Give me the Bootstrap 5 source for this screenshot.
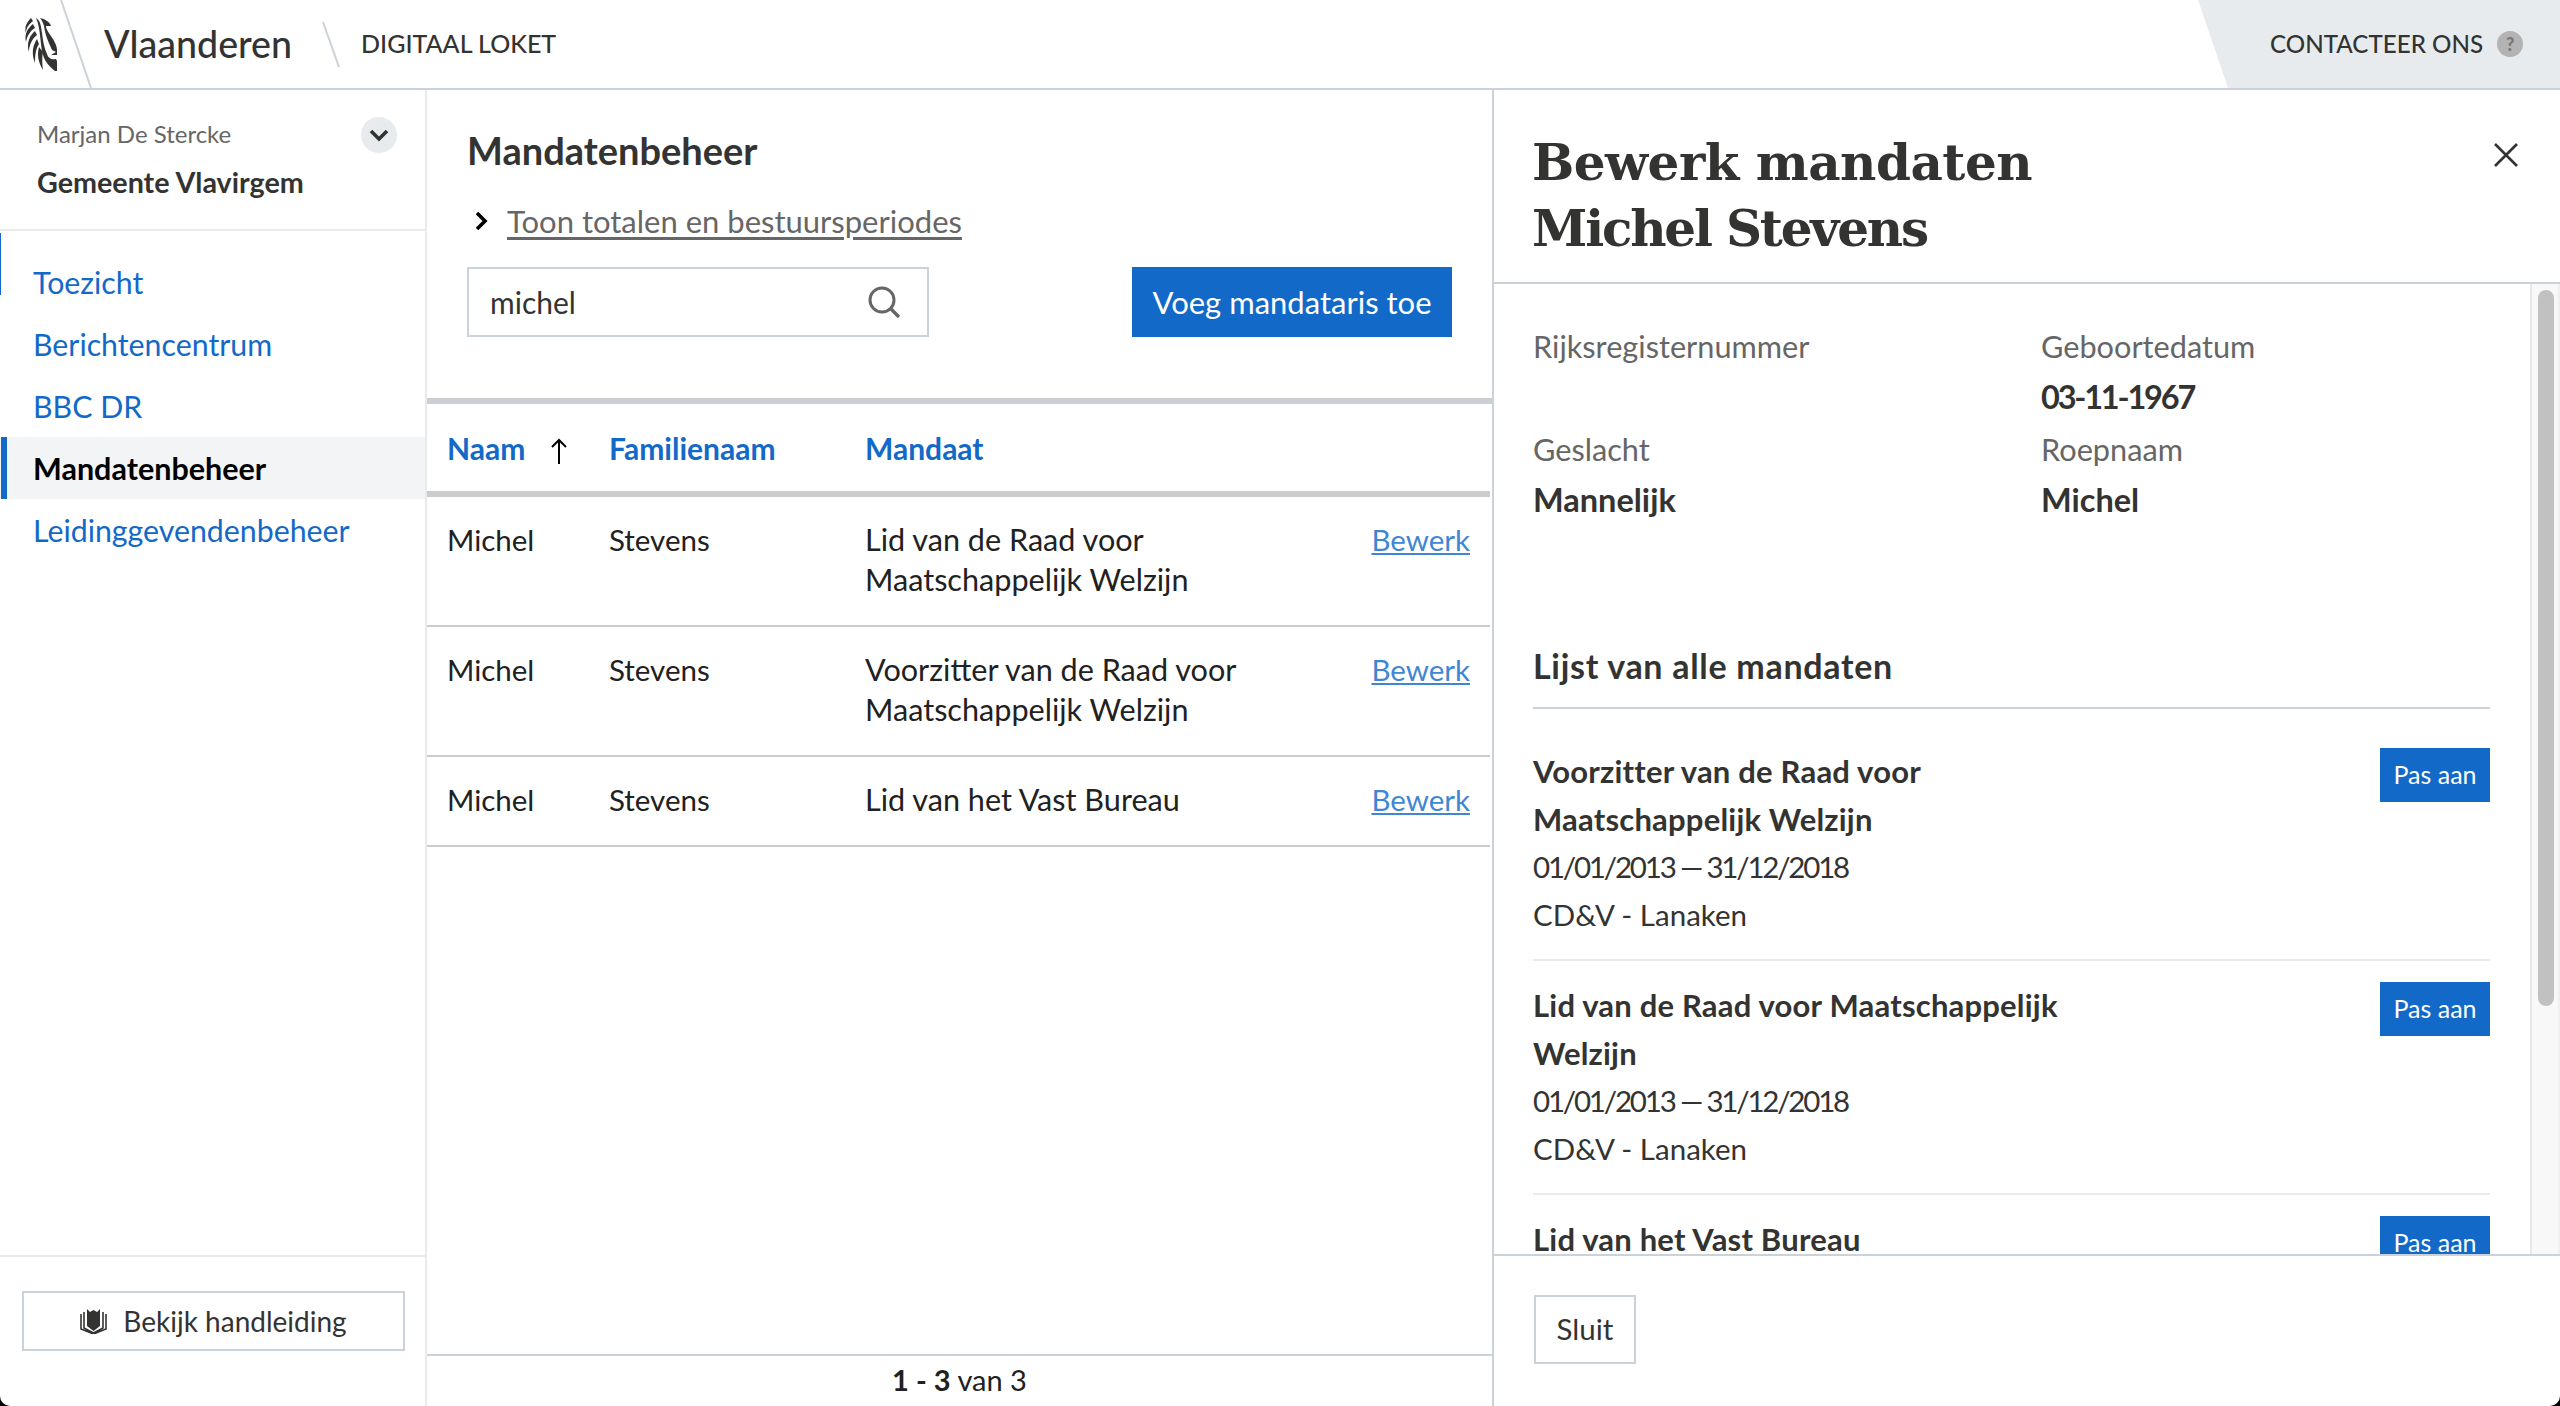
<!DOCTYPE html>
<html lang="nl">
<head>
<meta charset="UTF-8">
<meta name="viewport" content="width=device-width, initial-scale=1.0">
<title>Mandatenbeheer</title>
<link href="https://cdn.jsdelivr.net/npm/bootstrap@5.3.0/dist/css/bootstrap.min.css" rel="stylesheet">
<style>
html, body { height: 100%; background: #000; }
body { font-family: Lato, "Liberation Sans", sans-serif; font-size: 29px; color: #333332; overflow: hidden; }
.shell { height: 1406px; background: #fff; border-radius: 0 0 10px 10px; overflow: hidden; }

/* top bar */
.topbar { height: 90px; border-bottom: 2px solid #cbd2da; flex: none; }
.logo-mark { width: 34px; height: 54px; margin: 0 0 0 23px; flex: none; }
.slash-big { width: 32px; height: 88px; margin-left: 3px; flex: none; }
.brand-name { font-size: 37.6px; font-weight: 500; margin-left: 12px; line-height: 1; }
.slash-small { width: 18px; height: 45px; margin-left: 30px; flex: none; }
.brand-sub { font-size: 25px; font-weight: 500; margin-left: 21px; }
.contact-box { width: 362px; height: 88px; background: #e8ebee; clip-path: polygon(0 0, 100% 0, 100% 100%, 30px 100%); font-size: 24.2px; font-weight: 500; padding-left: 72px; gap: 14px; }
.help-dot { width: 26px; height: 26px; border-radius: 50%; background: #b3b3b3; color: #777; font-size: 18px; font-weight: 900; line-height: 26px; text-align: center; }

/* sidebar */
.side-col { width: 427px; border-right: 2px solid #e8ebee; flex: none; }
.user-block { height: 141px; border-bottom: 2px solid #e8ebee; padding: 28px 0 0 37px; flex: none; position: relative; }
.user-name { font-size: 24px; color: #666; line-height: 32px; }
.user-org { font-size: 28.7px; font-weight: 700; line-height: 34px; margin-top: 15px; }
.user-toggle { width: 36px; height: 36px; border-radius: 50%; background: #e8ebee; right: 28px; top: 27px; border: 0; padding: 0; }
.side-nav { padding-top: 20px; position: relative; }
.side-nav::before { content: ""; position: absolute; left: 0; top: 2px; width: 1px; height: 62px; background: #1269c8; }
.side-nav .nav-link { height: 62px; line-height: 62px; padding: 0 0 0 33px; font-size: 30.3px; color: #1269c8; }
.side-nav .nav-link.active { background: #f3f4f6; color: #000; font-weight: 700; font-size: 30.5px; position: relative; }
.side-nav .nav-link.active::before { content: ""; position: absolute; left: 1px; top: 0; bottom: 0; width: 6px; background: #1269c8; }
.side-foot { height: 151px; border-top: 2px solid #e8ebee; padding: 34px 20px 0 22px; margin-top: auto; flex: none; }
.btn-plain { border: 2px solid #cbd2da; border-radius: 0; background: #fff; color: #333332; }
.btn-manual { width: 383px; height: 60px; font-size: 28px; gap: 16px; padding: 0; }

/* middle */
.mid-col { width: 1067px; border-right: 2px solid #cbd2da; flex: none; }
.mid-head { height: 314px; padding: 0 40px 0 40px; border-bottom: 6px solid #cbcfd3; flex: none; }
.mid-title { font-size: 38px; font-weight: 700; line-height: 44px; padding-top: 38px; margin: 0; }
.toggle-row { margin-top: 27px; gap: 19px; height: 44px; padding-left: 7px; }
.toggle-row a { color: #666; font-size: 31px; text-underline-offset: 4px; }
.search-row { margin-top: 24px; }
.search-box { width: 462px; height: 70px; border: 2px solid #cbd2da; padding: 0 26px 0 21px; font-size: 30px; }
.btn-vl { background: #1269c8; color: #fff; border: 0; border-radius: 0; }
.btn-add { width: 320px; height: 70px; font-size: 31px; padding: 0; }
.mandate-table { margin: 0; width: 1063px; table-layout: fixed; border-collapse: collapse; }
.mandate-table th, .mandate-table td { font-family: Lato, "Liberation Sans", sans-serif; padding: 23px 20px 25px; line-height: 40px; font-size: 29.5px; color: #212121; border-bottom: 2px solid #ccc; vertical-align: top; box-shadow: none; }
.mandate-table th { height: 90px; padding: 0 20px; vertical-align: middle; border-bottom: 6px solid #ccc; color: #1269c8; font-weight: 700; font-size: 30px; white-space: nowrap; }
.mandate-table td.mandate-name { font-size: 30.6px; }
.mandate-table a { color: #3f86d4; }
.sort-arrow { width: 20px; height: 26px; margin-left: 24px; vertical-align: -4px; }
.mid-foot { height: 52px; border-top: 2px solid #cbd2da; margin-top: auto; text-align: center; line-height: 48px; font-size: 29px; color: #212121; flex: none; }

/* right panel */
.panel-col { min-width: 0; }
.panel-head { height: 194px; border-bottom: 2px solid #cbd2da; padding: 40px 40px 0 38px; flex: none; position: relative; }
.panel-title { font-family: "DejaVu Serif", "Liberation Serif", serif; font-size: 50px; font-weight: 700; line-height: 66px; margin: 0; letter-spacing: -.5px; }
.panel-title span { letter-spacing: -2.2px; }
.panel-close { right: 42px; top: 53px; width: 24px; height: 24px; background: none; border: 0; padding: 0; }
.panel-mid { min-height: 0; height: 970px; flex: none; }
.panel-body { padding: 0 40px 0 39px; overflow: hidden; min-width: 0; }
.detail-grid { padding-top: 42px; grid-template-columns: 508px 1fr; }
.detail-cell { height: 102.5px; }
.detail-label { color: #666; line-height: 42px; font-size: 30.7px; }
.detail-value { font-weight: 700; line-height: 48px; font-size: 32.5px; margin-top: 5px; }
.detail-value.is-date { letter-spacing: -2.2px; }
.list-title { font-size: 34px; font-weight: 700; letter-spacing: .7px; line-height: 40px; margin: 115px 0 0; padding-bottom: 21px; border-bottom: 2px solid #cbd2da; }
.mandate-item { padding: 20px 0; border-bottom: 2px solid #e8ebee; line-height: 48px; font-size: 29.5px; }
.mandate-item.is-first { padding-top: 38px; }
.mandate-item b { display: block; font-weight: 700; font-size: 31px; letter-spacing: .2px; max-width: 560px; }
.item-dates { letter-spacing: -2.2px; }
.btn-small { width: 110px; height: 54px; font-size: 25px; padding: 0; flex: none; margin-top: 1px; }
.bar-track { width: 30px; flex: none; background: #f8f8f8; border-left: 2px solid #e8e8e8; border-right: 2px solid #f0f0f0; padding: 6px 4px 0 6px; }
.bar-thumb { height: 716px; border-radius: 8px; background: #c1c1c1; }
.panel-foot { height: 152px; border-top: 2px solid #cbd2da; padding: 39px 0 0 40px; flex: none; }
.btn-close-panel { width: 102px; height: 69px; font-size: 29.5px; padding: 0; }
</style>
</head>
<body>
<div class="shell d-flex flex-column">

    <!-- top bar -->
    <header class="topbar d-flex align-items-center">
        <svg class="logo-mark" viewBox="0 0 34 54" fill="#333332">
            <path d="M8 1 C4 5 1 10 3 16 C3 11 6 7 10 4 Z"/>
            <path d="M10 7 C5 11 1 17 3 25 C4 19 7 14 12 11 Z"/>
            <path d="M12 14 C7 18 3 26 6 35 C6 28 9 22 14 18 Z"/>
            <path d="M14 22 C10 28 8 36 12 46 C12 38 13 31 16 27 Z"/>
            <path d="M16 30 C14 37 15 45 20 53 C19 46 19 39 20 35 Z"/>
            <path d="M13 1 C18 4 18 10 19 16 C20 24 21 31 24 37 C25 41 28 43 33 42 L34 44 L34 54 L32 54 C27 50 22 45 20 38 C17 28 18 12 13 1 Z"/>
            <path d="M17 1 C22 2 27 5 28 9 L23 9 C23 13 27 17 30 22 C32 26 34 29 34 33 L34 38 L28 38 L33 35 L29 33 C26 26 22 18 21 9 C20 6 19 3 17 1 Z"/>
        </svg>
        <svg class="slash-big" viewBox="0 0 32 88"><line x1="1" y1="0" x2="31" y2="88" stroke="#cbd2da" stroke-width="2"/></svg>
        <span class="brand-name">Vlaanderen</span>
        <svg class="slash-small" viewBox="0 0 18 45"><line x1="1" y1="0" x2="17" y2="45" stroke="#cbd2da" stroke-width="2"/></svg>
        <span class="brand-sub">DIGITAAL LOKET</span>
        <div class="contact-box ms-auto d-flex align-items-center">
            <span>CONTACTEER ONS</span>
            <span class="help-dot">?</span>
        </div>
    </header>

    <div class="d-flex flex-grow-1" style="min-height:0">

        <!-- sidebar -->
        <aside class="side-col d-flex flex-column">
            <div class="user-block">
                <div class="user-name">Marjan De Stercke</div>
                <div class="user-org">Gemeente Vlavirgem</div>
                <button class="user-toggle position-absolute d-flex align-items-center justify-content-center" type="button" aria-label="Open menu">
                    <svg width="20" height="13" viewBox="0 0 20 13"><path d="M2 2 L10 10 L18 2" fill="none" stroke="#333332" stroke-width="3.6"/></svg>
                </button>
            </div>
            <nav class="side-nav nav flex-column">
                <a class="nav-link" href="#">Toezicht</a>
                <a class="nav-link" href="#">Berichtencentrum</a>
                <a class="nav-link" href="#">BBC DR</a>
                <a class="nav-link active" href="#">Mandatenbeheer</a>
                <a class="nav-link" href="#">Leidinggevendenbeheer</a>
            </nav>
            <div class="side-foot">
                <button class="btn btn-plain btn-manual d-flex align-items-center justify-content-center" type="button">
                    <svg width="27" height="26" viewBox="0 0 27 26">
                        <path d="M7 1 L10 4 L13.5 2 L17 4 L20 1 L20 18 L13.5 23 L7 18 Z" fill="#333332"/>
                        <path d="M4 4 L4 20 L13.5 25 L23 20 L23 4 M1 6 L1 21 L13.5 26 L26 21 L26 6" fill="none" stroke="#333332" stroke-width="1.6"/>
                    </svg>
                    <span>Bekijk handleiding</span>
                </button>
            </div>
        </aside>

        <!-- middle -->
        <main class="mid-col d-flex flex-column">
            <div class="mid-head">
                <h1 class="mid-title">Mandatenbeheer</h1>
                <div class="toggle-row d-flex align-items-center">
                    <svg width="14" height="20" viewBox="0 0 14 20"><path d="M3 2 L11 10 L3 18" fill="none" stroke="#000" stroke-width="3.6"/></svg>
                    <a href="#">Toon totalen en bestuursperiodes</a>
                </div>
                <div class="search-row d-flex justify-content-between">
                    <div class="search-box d-flex align-items-center justify-content-between">
                        <span>michel</span>
                        <svg width="34" height="34" viewBox="0 0 34 34"><circle cx="15" cy="15" r="12" fill="none" stroke="#666" stroke-width="3"/><line x1="23.5" y1="23.5" x2="32" y2="32" stroke="#666" stroke-width="3.4"/></svg>
                    </div>
                    <button class="btn btn-vl btn-add" type="button">Voeg mandataris toe</button>
                </div>
            </div>
            <table class="table mandate-table">
                <colgroup>
                    <col style="width:162px"><col style="width:256px"><col style="width:490px"><col>
                </colgroup>
                <thead>
                    <tr>
                        <th>Naam<svg class="sort-arrow" viewBox="0 0 20 26"><path d="M10 26 L10 2 M3 9 L10 2 L17 9" fill="none" stroke="#000" stroke-width="2"/></svg></th>
                        <th>Familienaam</th>
                        <th>Mandaat</th>
                        <th></th>
                    </tr>
                </thead>
                <tbody>
                    <tr><td>Michel</td><td>Stevens</td><td class="mandate-name">Lid van de Raad voor<br>Maatschappelijk Welzijn</td><td class="text-end"><a href="#">Bewerk</a></td></tr>
                    <tr><td>Michel</td><td>Stevens</td><td class="mandate-name">Voorzitter van de Raad voor<br>Maatschappelijk Welzijn</td><td class="text-end"><a href="#">Bewerk</a></td></tr>
                    <tr><td>Michel</td><td>Stevens</td><td class="mandate-name">Lid van het Vast Bureau</td><td class="text-end"><a href="#">Bewerk</a></td></tr>
                </tbody>
            </table>
            <div class="mid-foot"><b>1 - 3</b> van 3</div>
        </main>

        <!-- detail panel -->
        <section class="panel-col flex-grow-1 d-flex flex-column">
            <div class="panel-head">
                <h2 class="panel-title">Bewerk mandaten<br><span>Michel Stevens</span></h2>
                <button class="panel-close position-absolute" type="button" aria-label="Sluit">
                    <svg width="24" height="24" viewBox="0 0 24 24" class="d-block"><path d="M1 1 L23 23 M23 1 L1 23" stroke="#333332" stroke-width="2.6"/></svg>
                </button>
            </div>
            <div class="panel-mid d-flex">
                <div class="panel-body flex-grow-1">
                    <div class="detail-grid d-grid">
                        <div class="detail-cell"><div class="detail-label">Rijksregisternummer</div></div>
                        <div class="detail-cell"><div class="detail-label">Geboortedatum</div><div class="detail-value is-date">03-11-1967</div></div>
                        <div class="detail-cell"><div class="detail-label">Geslacht</div><div class="detail-value">Mannelijk</div></div>
                        <div class="detail-cell"><div class="detail-label">Roepnaam</div><div class="detail-value">Michel</div></div>
                    </div>
                    <h3 class="list-title">Lijst van alle mandaten</h3>
                    <div class="mandate-item is-first d-flex justify-content-between">
                        <div><b>Voorzitter van de Raad voor Maatschappelijk Welzijn</b><span class="item-dates">01/01/2013 — 31/12/2018</span><br>CD&amp;V - Lanaken</div>
                        <button class="btn btn-vl btn-small" type="button">Pas aan</button>
                    </div>
                    <div class="mandate-item d-flex justify-content-between">
                        <div><b>Lid van de Raad voor Maatschappelijk Welzijn</b><span class="item-dates">01/01/2013 — 31/12/2018</span><br>CD&amp;V - Lanaken</div>
                        <button class="btn btn-vl btn-small" type="button">Pas aan</button>
                    </div>
                    <div class="mandate-item d-flex justify-content-between">
                        <div><b>Lid van het Vast Bureau</b></div>
                        <button class="btn btn-vl btn-small" type="button">Pas aan</button>
                    </div>
                </div>
                <div class="bar-track"><div class="bar-thumb"></div></div>
            </div>
            <div class="panel-foot">
                <button class="btn btn-plain btn-close-panel" type="button">Sluit</button>
            </div>
        </section>
    </div>
</div>
<script src="https://cdn.jsdelivr.net/npm/bootstrap@5.3.0/dist/js/bootstrap.bundle.min.js"></script>
</body>
</html>
